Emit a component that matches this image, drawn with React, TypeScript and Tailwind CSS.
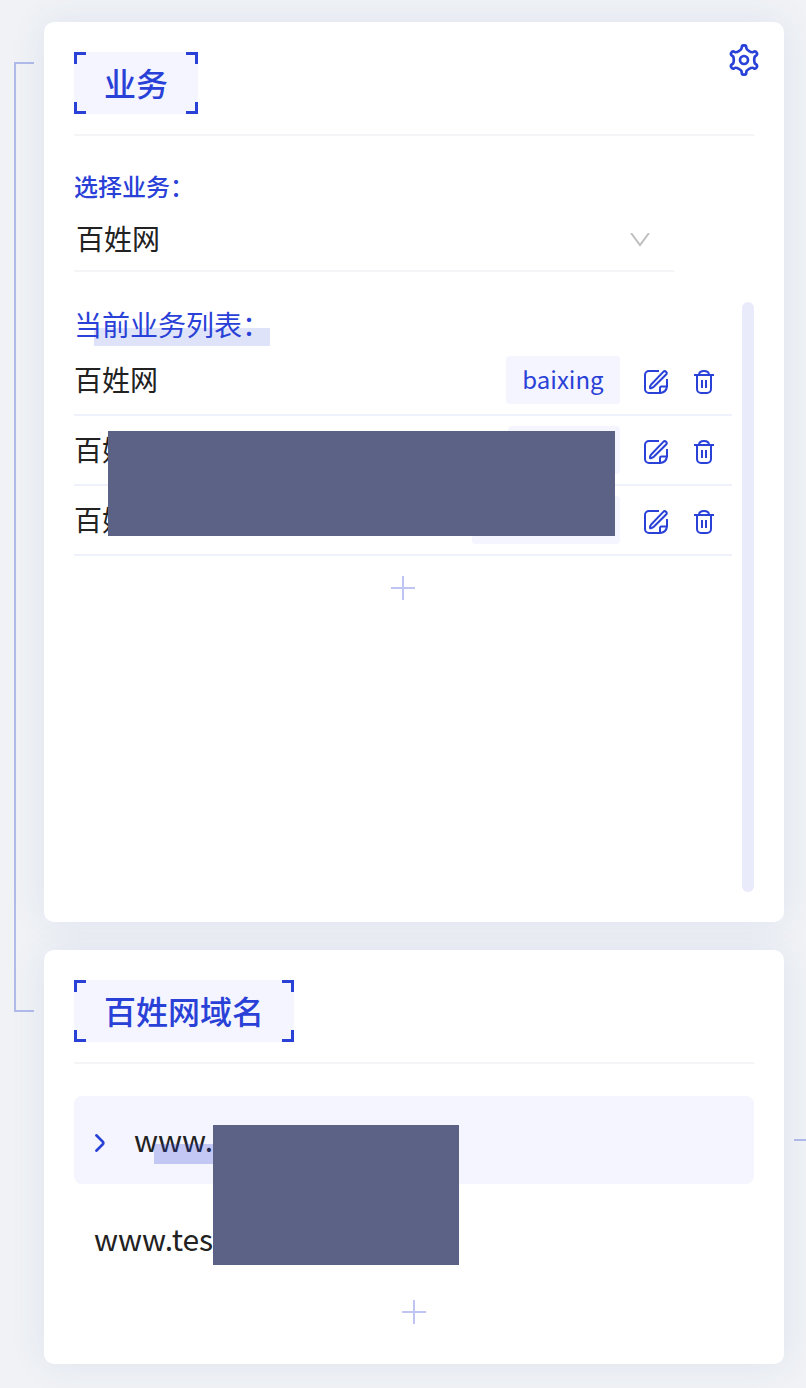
import React from "react";

const CJK = "font-['Noto_Sans_CJK_SC',sans-serif]";

// One lobe per 60 degrees, joined by shallow valleys around the centre (16, 16).
function gearPath() {
  const at = (turn: number, x: number, y: number) => {
    const a = (turn * Math.PI) / 3;
    const px = 16 + x * Math.cos(a) + y * Math.sin(a);
    const py = 16 + x * Math.sin(a) - y * Math.cos(a);
    return `${px.toFixed(2)} ${py.toFixed(2)}`;
  };
  let d = `M${at(0, -2.3, 11.9)}`;
  for (let k = 0; k < 6; k++) {
    d += `L${at(k, -2.3, 12.4)}A2.3 2.3 0 0 1 ${at(k, 2.3, 12.4)}L${at(k, 2.3, 11.9)}`;
    d += `C${at(k, 2.3, 10)} ${at(k + 1, -2.3, 10)} ${at(k + 1, -2.3, 11.9)}`;
  }
  return d + "Z";
}

function GearIcon() {
  return (
    <svg width="32" height="32" viewBox="0 0 32 32" fill="none" stroke="currentColor" strokeWidth="2.7" strokeLinejoin="round">
      <path d={gearPath()} />
      <circle cx="16" cy="16" r="4" />
    </svg>
  );
}

function EditIcon() {
  return (
    <svg width="24" height="24" viewBox="0 0 24 24" fill="none" stroke="currentColor" strokeWidth="2" strokeLinejoin="round">
      <path d="M15 1H5a4 4 0 0 0-4 4v14a4 4 0 0 0 4 4h11.500c3.500-.5 6-3 6.500-6.500V9" />
      <path d="M16 23v-5a1.500 1.500 0 0 1 1.500-1.500H23" />
      <path d="M19.300 1.900a1.900 1.900 0 0 1 2.800 2.600L9.800 16.800c-1 1-3.800 1.700-3.800 1.300 0-1 .4-2.800 1.400-3.900z" />
    </svg>
  );
}

function TrashIcon() {
  return (
    <svg width="20" height="24" viewBox="0 0 20 24" fill="none" stroke="currentColor" strokeWidth="2">
      <path d="M0 5h20M5 5c0-2.600 2-4 5-4s5 1.400 5 4M3 5v14a4 4 0 0 0 4 4h6a4 4 0 0 0 4-4V5M8 10v8M12 10v8" />
    </svg>
  );
}

function AddButton({ label }: { label: string }) {
  return (
    <button type="button" aria-label={label} className="mx-auto block text-[#bec5f3]">
      <svg width="24" height="24" viewBox="0 0 24 24" fill="none" stroke="currentColor" strokeWidth="2">
        <path d="M12 0v24M0 12h24" />
      </svg>
    </button>
  );
}

function Card({ title, children }: { title: string; children: React.ReactNode }) {
  return (
    <section className="relative rounded-[10px] bg-white p-[30px] shadow-[0_0_36px_rgba(60,90,185,0.09)]">
      <header className="border-b-2 border-[#f5f5f7] pb-5">
        <div className="relative inline-block bg-[#f4f5fe] px-[30px] pb-0.5 align-top">
          <h2 className="text-[32px] leading-[60px] font-medium text-[#2a41d8]">{title}</h2>
          <i className="absolute top-0 left-0 size-3 border-t-[3px] border-l-[3px] border-[#2a41d8]" />
          <i className="absolute top-0 right-0 size-3 border-t-[3px] border-r-[3px] border-[#2a41d8]" />
          <i className="absolute bottom-0 left-0 size-3 border-b-[3px] border-l-[3px] border-[#2a41d8]" />
          <i className="absolute right-0 bottom-0 size-3 border-r-[3px] border-b-[3px] border-[#2a41d8]" />
        </div>
      </header>
      {children}
    </section>
  );
}

const rows = [
  { name: "百姓网", tag: "baixing", width: "w-[114px]" },
  { name: "百姓", tag: "", width: "w-[112px]" },
  { name: "百姓", tag: "", width: "w-[148px]" },
];

export default function App() {
  return (
    <main className={`relative flex flex-col gap-7 overflow-hidden bg-[#f0f2f5] pt-[22px] pr-[22px] pb-6 pl-11 text-[#222] ${CJK}`}>
      <div className="absolute top-[62px] left-[14px] h-[950px] w-5 border-y-2 border-l-2 border-[#b1bbea]" />
      <div className="absolute right-0 bottom-[247px] h-0.5 w-3 bg-[#b1bbea]" />

      <Card title="业务">
        <button type="button" aria-label="设置" className="absolute top-[22px] right-6 text-[#2a41d8]">
          <GearIcon />
        </button>

        <div className="mt-8 w-[600px] max-w-full">
          <label htmlFor="business" className="block pb-0.5 text-[24px] leading-9 font-medium text-[#2a41d8]">
            选择业务：
          </label>
          <div className="relative border-b-2 border-[#f5f5f7]">
            <select id="business" className="block h-16 w-full appearance-none bg-transparent px-0.5 text-[28px] outline-none">
              <option>百姓网</option>
            </select>
            <svg className="pointer-events-none absolute top-[27px] right-6" width="20" height="14" viewBox="0 0 20 14" fill="none" stroke="#bfbfbf" strokeWidth="2">
              <path d="M1 0l9 12L19 0" />
            </svg>
          </div>
        </div>

        <div className="mt-[30px] flex min-h-[590px] gap-[10px]">
          <div className="relative flex-1">
            <h3 className="relative inline-block align-top text-[28px] leading-[44px] text-[#2a41d8]">
              当前业务列表：
              <span className="absolute top-[26px] right-0 left-5 h-[18px] bg-[#2a41d8]/15" />
            </h3>
            <ul>
              {rows.map((row, i) => (
                <li key={i} className="flex h-[70px] items-center border-b-2 border-[#eff2fc] pr-[18px]">
                  <span className="flex-1 pb-0.5 text-[28px] leading-10">{row.name}</span>
                  <span className={`h-12 rounded bg-[#f4f5fe] text-center text-[24px] leading-[46px] text-[#2a41d8] ${row.width}`}>
                    {row.tag}
                  </span>
                  <button type="button" aria-label="编辑" className="ml-6 pt-1 text-[#2a41d8]">
                    <EditIcon />
                  </button>
                  <button type="button" aria-label="删除" className="ml-[26px] pt-1 text-[#2a41d8]">
                    <TrashIcon />
                  </button>
                </li>
              ))}
            </ul>
            <div className="mt-5">
              <AddButton label="添加业务" />
            </div>
            <div className="absolute top-[129px] right-[117px] left-[34px] h-[105px] bg-[#5b6286]" />
          </div>
          <div className="w-3 rounded-full bg-[#eaebfa]" />
        </div>
      </Card>

      <Card title="百姓网域名">
        <div className="relative mt-8">
          <div className="flex h-[88px] items-center rounded-lg bg-[#f4f5fe] px-5">
            <svg width="12" height="20" viewBox="0 0 12 20" fill="none" stroke="#2a41d8" strokeWidth="2.6" strokeLinecap="round" strokeLinejoin="round" className="mt-1.5">
              <path d="M2.300 2.300l6.500 6.400a1.800 1.800 0 0 1 0 2.600l-6.500 6.400" />
            </svg>
            <a href="#domain" className="relative ml-7 pb-0.5 text-[30px] leading-[46px]">
              www.
              <span className="absolute bottom-0 left-5 h-5 w-[60px] bg-[#2a41d8]/25" />
            </a>
          </div>
          <div className="flex h-[112px] items-center px-5">
            <a href="#test" className="pb-1 text-[30px] leading-[46px]">www.tes</a>
          </div>
          <div className="absolute top-[29px] left-[139px] h-[140px] w-[246px] bg-[#5b6286]" />
        </div>
        <div className="mt-1 pb-[10px]">
          <AddButton label="添加域名" />
        </div>
      </Card>
    </main>
  );
}
